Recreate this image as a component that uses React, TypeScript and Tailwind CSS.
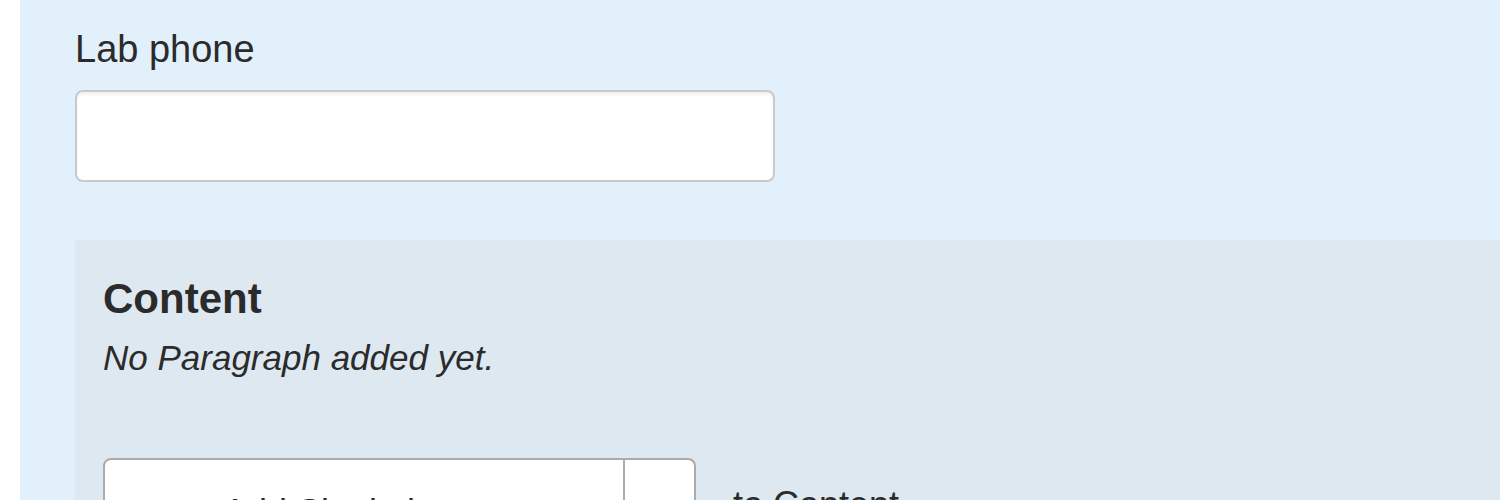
export default function App() {
  return (
    <div className="min-h-[500px] bg-white pl-[20px] font-['Liberation_Sans',Arial,sans-serif] text-[#2b2b2b]">
      <div className="min-h-[500px] bg-[#e2f0fb] pl-[55px] pt-[22px]">
        {/* Lab phone field */}
        <label className="block text-[38px] leading-[54px]">Lab phone</label>
        <input
          type="text"
          className="mt-[14px] block h-[92px] w-[700px] rounded-[8px] border-2 border-[#c9c9c9] bg-white shadow-[inset_0_3px_2px_rgba(0,0,0,0.05)] outline-none"
        />

        {/* Content paragraphs */}
        <section className="mt-[58px] bg-[#dee8f1] pl-[28px] pt-[34px] pb-[40px]">
          <h3 className="text-[42px] font-bold leading-[50px]">Content</h3>
          <p className="mt-[7px] text-[35px] italic leading-[54px]">No Paragraph added yet.</p>
          <div className="mt-[73px] flex items-start">
            <div className="flex h-[92px] rounded-[8px] border-2 border-[#ababab] bg-white">
              <button className="w-[520px] border-r-2 border-[#ababab] pt-[18px] text-center text-[36px] leading-[54px] text-[#2b2b2b]">
                Add Single image
              </button>
              <button className="w-[69px]" />
            </div>
            <span className="ml-[37px] pt-[20px] text-[36px] leading-[54px]">to Content</span>
          </div>
        </section>
      </div>
    </div>
  );
}
